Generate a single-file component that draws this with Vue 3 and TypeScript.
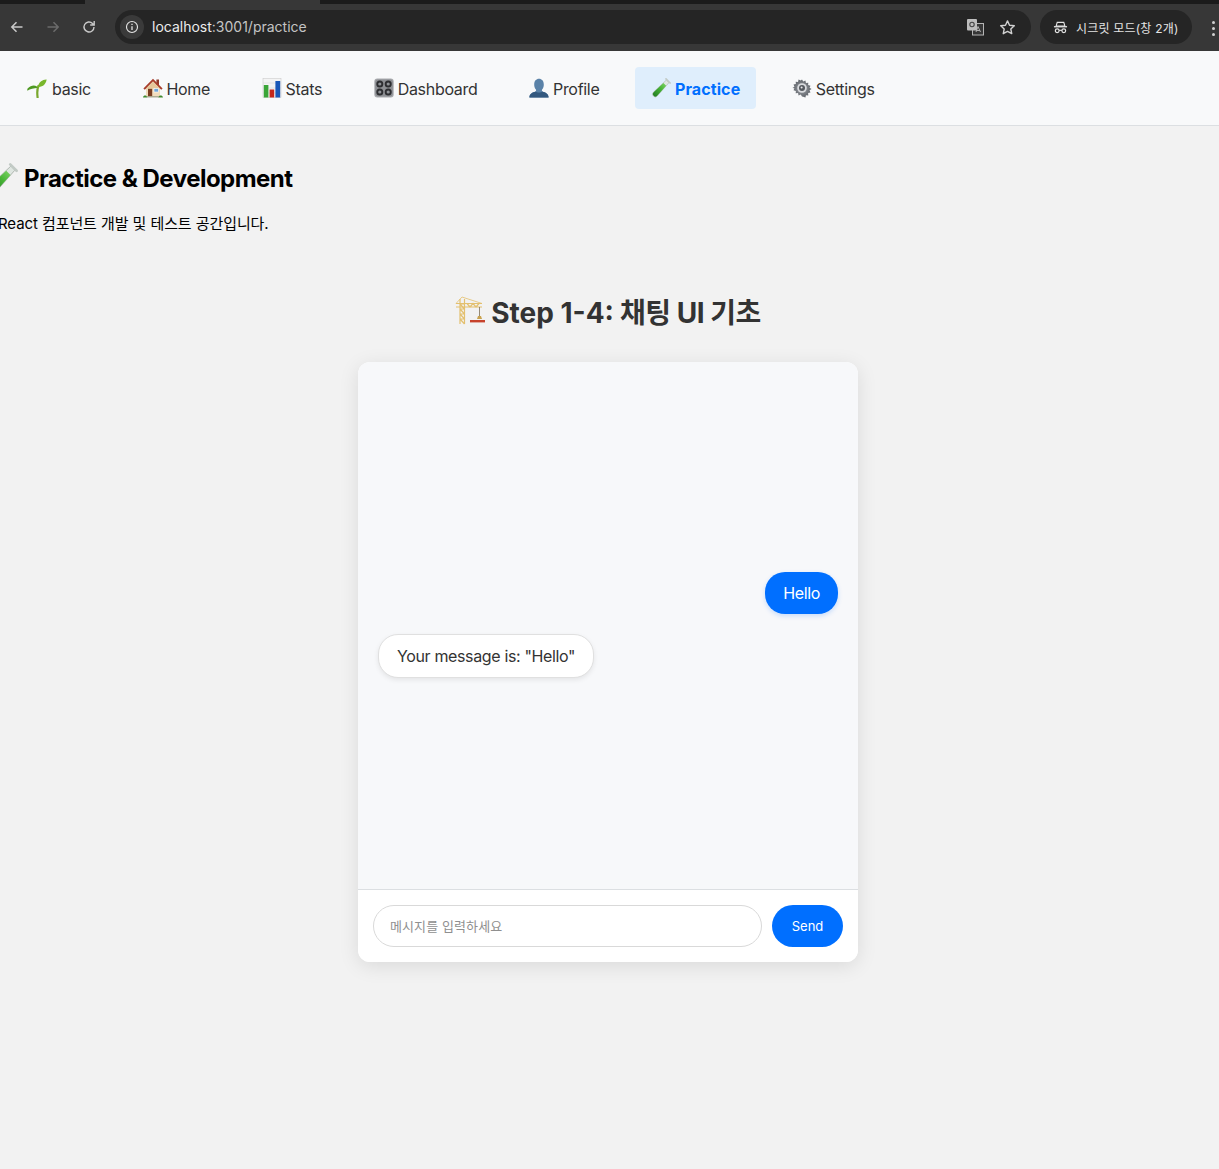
<template>
  <div class="page">
    <svg class="sprite" aria-hidden="true">
      <defs>
        <linearGradient id="tube-liquid" x1="0" y1="1" x2="1" y2="0">
          <stop offset="0" stop-color="#1f7a22" />
          <stop offset="0.6" stop-color="#49b537" />
          <stop offset="1" stop-color="#7fd468" />
        </linearGradient>
        <radialGradient id="gear-metal" cx="0.5" cy="0.5" r="0.6">
          <stop offset="0" stop-color="#a0a4a9" />
          <stop offset="1" stop-color="#54585e" />
        </radialGradient>
      </defs>
      <symbol id="e-sprout" viewBox="0 0 20 20">
        <path d="M10.600 19.500C10 15 10.200 11 11.400 8" fill="none" stroke="#7aa82e" stroke-width="2.200" stroke-linecap="round" />
        <path d="M10.800 9.800C9 6.800 4.500 6.600.4 10.800c-.2.800-.1 1.400 0 2C3 10.600 7 10.400 10.800 9.800z" fill="#4f9a22" />
        <path d="M11 9C11.600 4.400 15.400 1.400 19.600 1.600c-.4 4.200-3.800 7.800-8.600 7.400z" fill="#79b72c" />
      </symbol>
      <symbol id="e-house" viewBox="0 0 20 20">
        <rect x="13.400" y="1.500" width="2.600" height="5.500" fill="#8f3a2a" />
        <path d="M3 9h14v9H3z" fill="#f1dcbc" />
        <path d="M.4 10.400 10 .8l9.600 9.600-1.400 1.300L10 3.600 1.800 11.700z" fill="#a83d2a" />
        <path d="M10 3.600 17 10.400H3z" fill="#e6c79a" />
        <rect x="5" y="10.800" width="4.200" height="7.400" fill="#7a3d20" />
        <rect x="11" y="10.600" width="4.400" height="3.400" fill="#6fa6d8" stroke="#fff" stroke-width=".6" />
        <path d="M0 19.400c.4-2.400 3.600-2.600 4.200 0zM15.400 19.400c.6-2.600 4-2.400 4.600 0z" fill="#3f8a2e" />
        <rect x="4" y="18.200" width="12" height="1.200" fill="#9b9a7a" />
      </symbol>
      <symbol id="e-chart" viewBox="0 0 20 20">
        <rect x="1" y=".5" width="18" height="19" fill="#f4f4f4" stroke="#c4c4c4" stroke-width=".5" />
        <path d="M1 5h18M1 10h18M1 15h18" stroke="#d5d5d5" stroke-width=".5" />
        <rect x="1.800" y="7" width="4.600" height="12.500" fill="#3aa537" />
        <rect x="7.600" y="11.500" width="4.600" height="8" fill="#c5281c" />
        <rect x="13.400" y="3" width="4.800" height="16.500" fill="#1a58b8" />
      </symbol>
      <symbol id="e-knobs" viewBox="0 0 20 20">
        <rect x=".3" y=".6" width="19.400" height="18.800" rx="3" fill="#a9abae" />
        <rect x="1.200" y="1.500" width="17.600" height="17" rx="2.400" fill="#8d8f93" />
        <circle cx="5.800" cy="6" r="3.500" fill="#2d2e31" />
        <circle cx="14.200" cy="6" r="3.500" fill="#2d2e31" />
        <circle cx="5.800" cy="14" r="3.500" fill="#2d2e31" />
        <circle cx="14.200" cy="14" r="3.500" fill="#2d2e31" />
        <circle cx="5.800" cy="6" r="1.600" fill="#8f9296" />
        <circle cx="14.200" cy="6" r="1.600" fill="#8f9296" />
        <circle cx="5.800" cy="14" r="1.600" fill="#8f9296" />
        <circle cx="14.200" cy="14" r="1.600" fill="#8f9296" />
      </symbol>
      <symbol id="e-bust" viewBox="0 0 20 20">
        <path d="M.4 19.600c0-4.200 3.200-5.200 6.200-6.200.6-.4.6-1.200.3-1.800C5.700 10.200 5.200 8.400 5.200 6.400 5.200 3 7.200.8 10 .8s4.800 2.200 4.800 5.600c0 2-.5 3.800-1.700 5.200-.3.600-.3 1.400.3 1.800 3 1 6.200 2 6.200 6.200z" fill="#5a82a8" />
        <path d="M.4 19.600c0-4.200 3.200-5.200 6.200-6.200 1.400 1.400 5.400 1.400 6.800 0 3 1 6.200 2 6.200 6.200z" fill="#34597f" />
      </symbol>
      <symbol id="e-tube" viewBox="0 0 20 20">
        <path d="M15.400 2 18 4.600 6.200 18a2.600 2.600 0 0 1-3.800.1 2.600 2.600 0 0 1-.1-3.800z" fill="#dfe6e1" stroke="#9fa8a2" stroke-width=".5" />
        <path d="M12.400 5 15.200 7.800 6.200 17.700a2.500 2.500 0 0 1-3.600.1 2.500 2.500 0 0 1 0-3.600z" fill="url(#tube-liquid)" />
        <path d="M15 .9 19.100 5" stroke="#c2cac5" stroke-width="1.700" stroke-linecap="round" />
      </symbol>
      <symbol id="e-gear" viewBox="0 0 20 20">
        <path d="M10 .6l1.400 2.200 2.400-1 .6 2.600 2.600-.2-.2 2.600 2.600.6-1 2.400 2.200 1.400-2.200 1.400 1 2.400-2.600.6.2 2.600-2.600-.2-.6 2.600-2.400-1L10 19.400l-1.400-2.200-2.400 1-.6-2.600-2.600.2.2-2.600-2.600-.6 1-2.400L-.6 10l2.200-1.400-1-2.400 2.600-.6-.2-2.600 2.600.2.600-2.600 2.400 1z" fill="url(#gear-metal)" transform="translate(1 1) scale(.9)" />
        <circle cx="10" cy="10" r="4.800" fill="#d9dbde" />
        <circle cx="10" cy="10" r="3" fill="#55595f" />
        <circle cx="9.600" cy="9.400" r="1" fill="#e8e9eb" />
      </symbol>
      <symbol id="e-crane" viewBox="0 0 30 30">
        <g fill="none" stroke="#e3c06f" stroke-width="1.200">
          <path d="M5 3v25M9.500 3v25M5 8h4.500M5 13h4.500M5 18h4.500M5 23h4.500M5 8l4.500 5M5 13l4.500 5M5 18l4.500 5M5 23l4.500 5" />
          <path d="M1 7.500h26M1 11h26M12 7.500l3 3.500 3-3.500 3 3.500 3-3.500" />
          <path d="M7 1 1 7.500M7 1l20 6.500" stroke-width=".8" />
        </g>
        <path d="M24.500 11v10" stroke="#7c6f55" stroke-width=".8" />
        <path d="M23 20h3l1 3h-5z" fill="#c9a24f" />
        <rect x="15" y="24" width="15" height="2.400" fill="#c7432c" />
      </symbol>
    </svg>

    <header class="browser">
      <div class="tabstrip"><span class="tab-active"></span></div>
      <div class="toolbar">
        <svg class="tool" viewBox="0 0 16 16"><path d="M13.500 8H3M7.500 3.200 2.800 8l4.700 4.800" fill="none" stroke="#c9c9c9" stroke-width="1.500" /></svg>
        <svg class="tool" viewBox="0 0 16 16"><path d="M2.500 8H13M8.500 3.200 13.200 8l-4.700 4.800" fill="none" stroke="#6b6b6b" stroke-width="1.500" /></svg>
        <svg class="tool" viewBox="0 0 16 16"><path d="M13 8a5 5 0 1 1-1.500-3.600L13 5.800M13.200 2v4h-4" fill="none" stroke="#c9c9c9" stroke-width="1.400" /></svg>
        <div class="omnibox">
          <span class="site-info">
            <svg viewBox="0 0 16 16" width="14" height="14"><circle cx="8" cy="8" r="6.300" fill="none" stroke="#e4e4e4" stroke-width="1.300" /><path d="M8 7.200v4.300M8 4.300v1.500" stroke="#e4e4e4" stroke-width="1.500" /></svg>
          </span>
          <span class="url"><b>localhost</b>:3001/practice</span>
          <svg class="omni-icon translate" viewBox="0 0 18 18">
            <rect x="6.500" y="5.500" width="11" height="11.500" fill="#373737" stroke="#b5b5b5" stroke-width="1" />
            <rect x="1" y="1" width="10" height="11.500" rx="1" fill="#bdbdbd" />
            <circle cx="6" cy="6.500" r="2.200" fill="none" stroke="#444" stroke-width="1.100" />
            <path d="m10 14 2-5.500 2.500 5.500M10.800 12.500h3" fill="none" stroke="#bdbdbd" stroke-width=".9" />
          </svg>
          <svg class="omni-icon star" viewBox="0 0 16 16"><path d="m8 1.800 1.900 4.100 4.500.5-3.300 3 .9 4.400L8 11.600 4 13.800l.9-4.400-3.300-3 4.500-.5z" fill="none" stroke="#d2d2d2" stroke-width="1.300" stroke-linejoin="round" /></svg>
        </div>
        <div class="incognito">
          <svg viewBox="0 0 16 16" width="15" height="15" fill="none" stroke="#e4e4e4">
            <path d="M4.500 2.500h7l1.200 4H3.300z" stroke-width="1.200" />
            <path d="M1 7.200h14" stroke-width="1.400" />
            <circle cx="4.500" cy="11.500" r="2" stroke-width="1.300" />
            <circle cx="11.500" cy="11.500" r="2" stroke-width="1.300" />
            <path d="M6.500 11h3" stroke-width="1.200" />
          </svg>
          <span>시크릿 모드(창 2개)</span>
        </div>
        <span class="dots"><i></i><i></i><i></i></span>
      </div>
    </header>

    <nav class="nav">
      <a
        v-for="item in navItems"
        :key="item.label"
        class="nav-item"
        :class="{ active: item.active }"
      >
        <svg class="emoji"><use :href="`#e-${item.icon}`" /></svg>
        <span :class="{ spaced: item.icon === 'sprout' }">{{ item.label }}</span>
      </a>
    </nav>

    <main class="content">
      <section class="intro">
        <h2><svg class="emoji-lg"><use href="#e-tube" /></svg>Practice &amp; Development</h2>
        <p>React 컴포넌트 개발 및 테스트 공간입니다.</p>
      </section>

      <section class="practice">
        <h2>
          <svg class="emoji-crane"><use href="#e-crane" /></svg>
          <span><span class="step-no">Step 1-4:</span> 채팅 UI 기초</span>
        </h2>
        <div class="chat">
          <div class="messages">
            <div class="bubble user">Hello</div>
            <div class="bubble bot">Your message is: "Hello"</div>
          </div>
          <form class="composer" @submit.prevent>
            <input type="text" placeholder="메시지를 입력하세요" />
            <button type="submit">Send</button>
          </form>
        </div>
      </section>
    </main>
  </div>
</template>

<script setup lang="ts">
type NavItem = {
  label: string
  icon: string
  active?: boolean
}

const navItems: NavItem[] = [
  { label: 'basic', icon: 'sprout' },
  { label: 'Home', icon: 'house' },
  { label: 'Stats', icon: 'chart' },
  { label: 'Dashboard', icon: 'knobs' },
  { label: 'Profile', icon: 'bust' },
  { label: 'Practice', icon: 'tube', active: true },
  { label: 'Settings', icon: 'gear' },
]
</script>

<style>
html,
body {
  background: #f2f2f2;
}
</style>

<style scoped>
.page {
  height: 1169px;
  overflow: hidden;
  background: #f2f2f2;
  font-family: Inter, "Noto Sans CJK KR", sans-serif;
  color: #000;
}

.sprite {
  position: absolute;
  width: 0;
  height: 0;
}

.browser {
  height: 51px;
  background: #373737;
}

.tabstrip {
  height: 4px;
  background: #1b1b1b;
}

.tab-active {
  display: block;
  width: 235px;
  height: 4px;
  margin-left: 85px;
  background: #373737;
}

.toolbar {
  height: 47px;
  display: flex;
  align-items: flex-start;
  padding: 6px 0 0 9px;
  box-sizing: border-box;
}

.tool {
  width: 16px;
  height: 16px;
  margin: 9px 20px 0 0;
  flex: none;
}

.tool:nth-child(3) {
  margin-right: 18px;
}

.omnibox {
  width: 916px;
  height: 34px;
  flex: none;
  display: flex;
  align-items: center;
  padding-left: 5px;
  box-sizing: border-box;
  border-radius: 17px;
  background: #252525;
}

.site-info {
  width: 24px;
  height: 24px;
  display: grid;
  place-items: center;
  border-radius: 50%;
  background: #3a3a3a;
}

.url {
  margin-left: 8px;
  font-size: 14px;
  line-height: 16px;
  color: #c4c4c4;
}

.url b {
  font-weight: 400;
  color: #ececec;
}

.omni-icon {
  flex: none;
}

.translate {
  width: 18px;
  height: 18px;
  margin-left: auto;
}

.star {
  width: 17px;
  height: 17px;
  margin: 0 15px;
}

.incognito {
  width: 152px;
  height: 34px;
  flex: none;
  margin-left: 9px;
  display: flex;
  align-items: center;
  gap: 8px;
  padding-left: 13px;
  box-sizing: border-box;
  border-radius: 17px;
  background: #252525;
  font-size: 12px;
  letter-spacing: 0.2px;
  color: #e4e4e4;
}

.dots {
  display: grid;
  gap: 3px;
  margin: 11px 0 0 20px;
}

.dots i {
  width: 3px;
  height: 3px;
  border-radius: 50%;
  background: #d0d0d0;
}

.nav {
  height: 75px;
  box-sizing: border-box;
  display: flex;
  align-items: center;
  gap: 20px;
  padding: 0 11px 1px;
  background: #f8f9fa;
  border-bottom: 1px solid #dcdfe2;
}

.nav-item {
  height: 42px;
  display: flex;
  align-items: center;
  gap: 3.5px;
  padding: 0 16px;
  box-sizing: border-box;
  border-radius: 4px;
  font-size: 16px;
  letter-spacing: -0.3px;
  color: #333;
}

.nav-item span {
  padding-top: 2px;
}

.nav-item.active {
  background: #dfeefc;
  color: #006fff;
  font-weight: 700;
  letter-spacing: 0.1px;
}

.emoji {
  width: 20px;
  height: 20px;
  flex: none;
}

.spaced {
  margin-left: 1.5px;
}

.content {
  display: flex;
  flex-direction: column;
}

.intro {
  margin-left: -2px;
  padding-top: 36px;
}

.intro h2 {
  display: flex;
  align-items: center;
  gap: 6px;
  margin: 0 0 0 -11px;
  height: 32px;
  font-size: 24px;
  font-weight: 700;
  letter-spacing: -0.52px;
}

.emoji-lg {
  width: 31px;
  height: 31px;
  flex: none;
}

.intro p {
  margin: 18px 0 0;
  font-size: 15px;
  line-height: 24px;
  letter-spacing: -0.08px;
}

.practice {
  display: flex;
  flex-direction: column;
  align-items: center;
  margin-top: 57px;
  padding-right: 3px;
}

.practice h2 {
  display: flex;
  align-items: center;
  gap: 6px;
  margin: 0 0 33px;
  height: 36px;
  font-size: 28px;
  font-weight: 700;
  color: #333;
  letter-spacing: -0.5px;
}

.step-no {
  letter-spacing: 0;
}

.emoji-crane {
  width: 30px;
  height: 30px;
  flex: none;
}

.chat {
  width: 500px;
  height: 600px;
  display: flex;
  flex-direction: column;
  overflow: hidden;
  border-radius: 12px;
  background: #fff;
  box-shadow: 0 4px 20px rgba(0, 0, 0, 0.1);
}

.messages {
  flex: 1;
  display: flex;
  flex-direction: column;
  justify-content: center;
  gap: 20px;
  padding: 0 20px 2px;
  background: #f7f8fa;
}

.bubble {
  padding: 10px 18px;
  border-radius: 20px;
  font-size: 16px;
  line-height: 22px;
  letter-spacing: -0.36px;
}

.user {
  align-self: flex-end;
  background: #006fff;
  color: #fff;
  box-shadow: 0 2px 5px rgba(0, 111, 255, 0.2);
}

.bot {
  align-self: flex-start;
  background: #fff;
  color: #333;
  border: 1px solid #e0e0e0;
  box-shadow: 0 2px 5px rgba(0, 0, 0, 0.08);
}

.composer {
  display: flex;
  gap: 10px;
  padding: 15px;
  background: #fff;
  border-top: 1px solid #dcdfe2;
}

.composer input {
  flex: 1;
  min-width: 0;
  height: 42px;
  box-sizing: border-box;
  padding: 0 16px;
  border: 1px solid #d9d9d9;
  border-radius: 21px;
  outline: none;
  background: #fff;
  font-family: Inter, "Noto Sans CJK KR", sans-serif;
  font-size: 13px;
  letter-spacing: 0.1px;
}

.composer input::placeholder {
  color: #8f8f8f;
}

.composer button {
  width: 71px;
  height: 42px;
  border: 0;
  border-radius: 21px;
  background: #006fff;
  color: #fff;
  font-family: Inter, sans-serif;
  font-size: 13px;
}
</style>
